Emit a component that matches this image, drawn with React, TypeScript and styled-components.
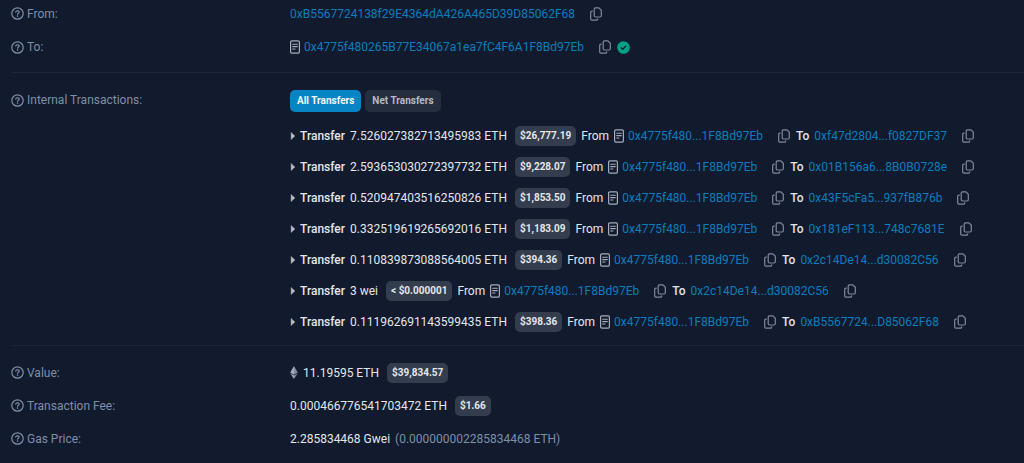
import React from "react";
import styled, { createGlobalStyle } from "styled-components";

const Global = createGlobalStyle`
  *, *::before, *::after { box-sizing: border-box; }
  body {
    margin: 0;
    background: #121a2d;
    color: #e2e6eb;
    font: 400 12px/20px Roboto, "Liberation Sans", sans-serif;
  }
`;

const Details = styled.main`
  padding-left: 11px;
`;

const Section = styled.dl`
  margin: 0;
  padding: 17px 0 8px;
  border-bottom: 1px solid #1c2638;

  &:first-child { padding: 0 0 5px; }
  &:last-child { padding: 10px 0 0; border-bottom: 0; }
`;

const Row = styled.div<{ $height?: number }>`
  display: grid;
  grid-template-columns: 279px 1fr;
  align-items: center;
  min-height: ${(p) => p.$height ?? 33}px;
`;

const TopRow = styled(Row)`
  align-items: start;
`;

const Label = styled.dt`
  display: flex;
  align-items: center;
  gap: 3px;
  color: #7f8fa8;
`;

const Value = styled.dd`
  display: flex;
  align-items: center;
  gap: 5px;
  margin: 0;
  white-space: nowrap;
`;

const TransferPanel = styled.dd`
  margin: 0;
  white-space: nowrap;
`;

const Tabs = styled.div`
  display: flex;
  gap: 4px;
  margin-bottom: 8px;
`;

const Tab = styled.button<{ $active?: boolean }>`
  height: 22px;
  padding: 0 7px;
  border: 0;
  border-radius: 5px;
  background: ${(p) => (p.$active ? "#0784c3" : "#242e3f")};
  color: ${(p) => (p.$active ? "#f4f8fb" : "#b3bbc8")};
  font: 700 10px/22px Roboto, "Liberation Sans", sans-serif;
  cursor: pointer;
`;

const TransferList = styled.ul`
  margin: 0;
  padding: 0;
  list-style: none;
`;

const Transfer = styled.li`
  display: flex;
  align-items: center;
  gap: 5px;
  height: 31px;
`;

const Strong = styled.span`
  font-weight: 500;
`;

const Badge = styled.span`
  height: 20px;
  margin-left: 3px;
  padding: 0 5px;
  border-radius: 5px;
  background: #343d4d;
  color: #e3e7ec;
  font-size: 10px;
  font-weight: 700;
  line-height: 20px;
`;

const Address = styled.a`
  color: #077fbe;
  text-decoration: none;
`;

const Contract = styled.span`
  display: flex;
  align-items: center;
  gap: 4px;
`;

const Muted = styled.span`
  color: #7f8fa8;
`;

const IconButton = styled.button`
  display: flex;
  margin: 0 1px 0 10px;
  padding: 0;
  border: 0;
  background: none;
  color: #808a9c;
  cursor: pointer;
`;

const Svg = styled.svg`
  display: block;
  flex: none;
`;

const HelpIcon = () => (
  <Svg width="13" height="13" viewBox="0 0 13 13" fill="none" stroke="#7f8fa8" aria-hidden="true">
    <circle cx="6.5" cy="6.5" r="5.7" strokeWidth="1.2" />
    <path d="M4.8 5.1C4.8 4.2 5.4 3.8 6.2 3.8h.6c.8 0 1.4.5 1.4 1.3 0 1-1.6 1.1-1.6 2.1" strokeWidth="1.2" strokeLinecap="round" />
    <circle cx="6.55" cy="9.1" r=".8" fill="#7f8fa8" stroke="none" />
  </Svg>
);

const ContractIcon = () => (
  <Svg width="10" height="14" viewBox="0 0 10 14" fill="none" stroke="#a5adba" role="img" aria-label="Contract">
    <rect x=".6" y=".9" width="8.8" height="12.2" rx="1.3" strokeWidth="1.2" />
    <path d="M2.7 4.2h4.6M2.7 6.6h4.6M2.7 9h2.3" strokeWidth="1.1" strokeLinecap="round" />
  </Svg>
);

const CopyIcon = () => (
  <Svg width="12" height="14" viewBox="0 0 12 14" fill="none" stroke="currentColor" strokeWidth="1.2" aria-hidden="true">
    <path d="M5.4.9h3.5l2.4 2.3v5.6a1.2 1.2 0 0 1-1.2 1.2H5.4A1.2 1.2 0 0 1 4.2 8.8V2.1A1.2 1.2 0 0 1 5.4.9Z" strokeLinejoin="round" />
    <path d="M2.3 4.1H1.9A1.2 1.2 0 0 0 .7 5.3v6.6a1.2 1.2 0 0 0 1.2 1.2h4.6a1.2 1.2 0 0 0 1.2-1.2V11.9" strokeLinecap="round" />
  </Svg>
);

const CheckIcon = () => (
  <Svg width="13" height="13" viewBox="0 0 13 13" role="img" aria-label="Verified">
    <circle cx="6.5" cy="6.5" r="6.3" fill="#00a186" />
    <path d="M4.2 6.7l1.6 1.6 3-3.2" fill="none" stroke="#121a2d" strokeWidth="1.3" strokeLinecap="round" strokeLinejoin="round" />
  </Svg>
);

const Caret = () => (
  <Svg width="5" height="8" viewBox="0 0 5 8" aria-hidden="true">
    <path d="M1.1.4 4.9 4 1.1 7.6Z" fill="#b9bfc8" stroke="#b9bfc8" strokeWidth=".4" strokeLinejoin="round" />
  </Svg>
);

const EtherIcon = () => (
  <Svg width="8" height="13" viewBox="0 0 8 13" aria-hidden="true">
    <path d="M4 0 .2 6.4 4 8.7Z" fill="#a3adbd" />
    <path d="M4 0 7.8 6.4 4 8.7Z" fill="#7f8b9f" />
    <path d="M.2 7.3 4 9.6V13Z" fill="#a3adbd" />
    <path d="M7.8 7.3 4 9.6V13Z" fill="#7f8b9f" />
  </Svg>
);

const Copy = () => (
  <IconButton type="button" aria-label="Copy address">
    <CopyIcon />
  </IconButton>
);

const Term = ({ children }: { children: React.ReactNode }) => (
  <Label>
    <HelpIcon />
    {children}
  </Label>
);

const transfers = [
  { amount: "7.526027382713495983 ETH", usd: "$26,777.19", to: "0xf47d2804...f0827DF37" },
  { amount: "2.593653030272397732 ETH", usd: "$9,228.07", to: "0x01B156a6...8B0B0728e" },
  { amount: "0.520947403516250826 ETH", usd: "$1,853.50", to: "0x43F5cFa5...937fB876b" },
  { amount: "0.332519619265692016 ETH", usd: "$1,183.09", to: "0x181eF113...748c7681E" },
  { amount: "0.110839873088564005 ETH", usd: "$394.36", to: "0x2c14De14...d30082C56" },
  { amount: "3 wei", usd: "< $0.000001", to: "0x2c14De14...d30082C56" },
  { amount: "0.111962691143599435 ETH", usd: "$398.36", to: "0xB5567724...D85062F68" },
];

export default function App() {
  return (
    <>
      <Global />
      <Details>
        <Section>
          <Row $height={27}>
            <Term>From:</Term>
            <Value>
              <Address href="#from">0xB5567724138f29E4364dA426A465D39D85062F68</Address>
              <Copy />
            </Value>
          </Row>
          <Row $height={40}>
            <Term>To:</Term>
            <Value>
              <Contract>
                <ContractIcon />
                <Address href="#to">0x4775f480265B77E34067a1ea7fC4F6A1F8Bd97Eb</Address>
              </Contract>
              <Copy />
              <CheckIcon />
            </Value>
          </Row>
        </Section>
        <Section>
          <TopRow>
            <Term>Internal Transactions:</Term>
            <TransferPanel>
              <Tabs>
                <Tab type="button" $active>All Transfers</Tab>
                <Tab type="button">Net Transfers</Tab>
              </Tabs>
              <TransferList>
                {transfers.map((t) => (
                  <Transfer key={t.usd}>
                    <Caret />
                    <Strong>Transfer</Strong>
                    <span>{t.amount}</span>
                    <Badge>{t.usd}</Badge>
                    <span>From</span>
                    <Contract>
                      <ContractIcon />
                      <Address href="#contract">0x4775f480...1F8Bd97Eb</Address>
                    </Contract>
                    <Copy />
                    <Strong>To</Strong>
                    <Address href="#recipient">{t.to}</Address>
                    <Copy />
                  </Transfer>
                ))}
              </TransferList>
            </TransferPanel>
          </TopRow>
        </Section>
        <Section>
          <Row>
            <Term>Value:</Term>
            <Value>
              <EtherIcon />
              <span>11.19595 ETH</span>
              <Badge>$39,834.57</Badge>
            </Value>
          </Row>
          <Row>
            <Term>Transaction Fee:</Term>
            <Value>
              <span>0.000466776541703472 ETH</span>
              <Badge>$1.66</Badge>
            </Value>
          </Row>
          <Row>
            <Term>Gas Price:</Term>
            <Value>
              <span>2.285834468 Gwei</span>
              <Muted>(0.000000002285834468 ETH)</Muted>
            </Value>
          </Row>
        </Section>
      </Details>
    </>
  );
}
